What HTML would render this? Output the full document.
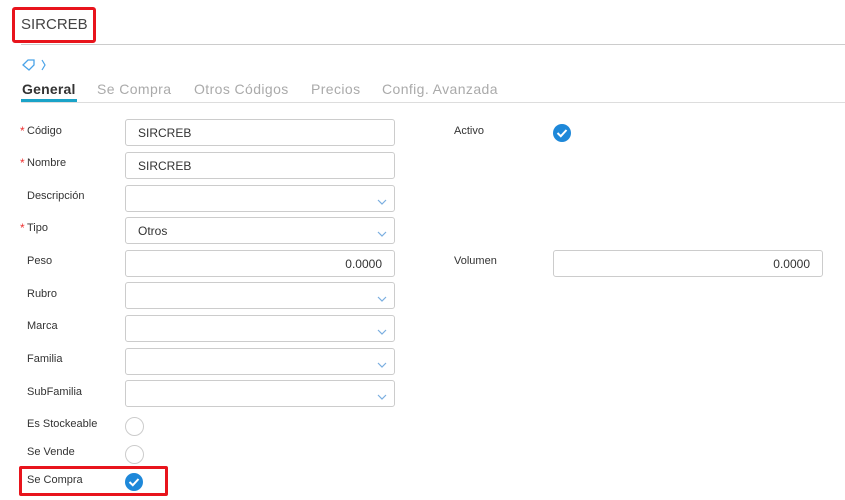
<!DOCTYPE html>
<html><head><meta charset="utf-8"><style>
*{margin:0;padding:0;box-sizing:border-box}
body{width:845px;height:500px;background:#fff;font-family:"Liberation Sans",sans-serif;position:relative;overflow:hidden;color:#333}
.a{position:absolute}
.lbl{position:absolute;font-size:11px;color:#333;left:27px}
.star{position:absolute;left:20px;color:#e33;font-size:12px}
.inp{position:absolute;left:125px;width:270px;height:27px;border:1px solid #ccc;border-radius:3px;font-size:12px;color:#333;padding:0 12px;line-height:27px}
.chev{position:absolute;right:5px;top:12px}
.tab{position:absolute;top:81px;font-size:14px;color:#aaa;letter-spacing:0.4px}
.circ{position:absolute;width:19px;height:19px;border:1px solid #ccc;border-radius:50%}
</style></head><body>
<div class="a" style="left:12px;top:7px;width:84px;height:36px;border:3px solid #e8141c;border-radius:3px"></div>
<div class="a" style="left:21px;top:16px;font-size:15px;color:#444">SIRCREB</div>
<div class="a" style="left:21px;top:44px;width:824px;height:1px;background:#ccc"></div>
<svg class="a" style="left:22px;top:59px" width="24" height="14" viewBox="0 0 24 14"><path d="M1 6 L6 1 L12 1 L12 6 L7 11 Z" fill="none" stroke="#4aa3e8" stroke-width="1.3"/><path d="M20 1 L23 6 L20 11" fill="none" stroke="#4aa3e8" stroke-width="1.2"/></svg>
<div class="tab" style="left:22px;color:#333;font-weight:bold;letter-spacing:0.2px">General</div>
<div class="tab" style="left:97px">Se Compra</div>
<div class="tab" style="left:194px">Otros Códigos</div>
<div class="tab" style="left:311px">Precios</div>
<div class="tab" style="left:382px">Config. Avanzada</div>
<div class="a" style="left:21px;top:99px;width:56px;height:3px;background:#1aa3c8"></div>
<div class="a" style="left:21px;top:102px;width:824px;height:1px;background:#ddd"></div>

<span class="star" style="top:124px">*</span><div class="lbl" style="top:125px">Código</div>
<div class="inp" style="top:119px">SIRCREB</div>
<span class="star" style="top:156px">*</span><div class="lbl" style="top:157px">Nombre</div>
<div class="inp" style="top:152px">SIRCREB</div>
<div class="lbl" style="top:190px">Descripción</div>
<div class="inp" style="top:185px"><svg class="chev" width="12" height="8"><path d="M1 2 L5 6 L9 2" fill="none" stroke="#7aaee0" stroke-width="1.2"/></svg></div>
<span class="star" style="top:221px">*</span><div class="lbl" style="top:222px">Tipo</div>
<div class="inp" style="top:217px">Otros<svg class="chev" width="12" height="8"><path d="M1 2 L5 6 L9 2" fill="none" stroke="#7aaee0" stroke-width="1.2"/></svg></div>
<div class="lbl" style="top:255px">Peso</div>
<div class="inp" style="top:250px;text-align:right">0.0000</div>
<div class="lbl" style="top:288px">Rubro</div>
<div class="inp" style="top:282px"><svg class="chev" width="12" height="8"><path d="M1 2 L5 6 L9 2" fill="none" stroke="#7aaee0" stroke-width="1.2"/></svg></div>
<div class="lbl" style="top:320px">Marca</div>
<div class="inp" style="top:315px"><svg class="chev" width="12" height="8"><path d="M1 2 L5 6 L9 2" fill="none" stroke="#7aaee0" stroke-width="1.2"/></svg></div>
<div class="lbl" style="top:353px">Familia</div>
<div class="inp" style="top:348px"><svg class="chev" width="12" height="8"><path d="M1 2 L5 6 L9 2" fill="none" stroke="#7aaee0" stroke-width="1.2"/></svg></div>
<div class="lbl" style="top:386px">SubFamilia</div>
<div class="inp" style="top:380px"><svg class="chev" width="12" height="8"><path d="M1 2 L5 6 L9 2" fill="none" stroke="#7aaee0" stroke-width="1.2"/></svg></div>

<div class="lbl" style="top:418px">Es Stockeable</div>
<div class="circ" style="left:125px;top:417px"></div>
<div class="lbl" style="top:446px">Se Vende</div>
<div class="circ" style="left:125px;top:445px"></div>
<div class="a" style="left:19px;top:466px;width:149px;height:30px;border:3px solid #e8141c;border-radius:2px"></div>
<div class="lbl" style="top:474px">Se Compra</div>
<svg class="a" style="left:124px;top:472px" width="20" height="20"><circle cx="10" cy="10" r="9" fill="#1e88d9"/><path d="M5.5 10 L8.8 13.2 L14.5 7" fill="none" stroke="#fff" stroke-width="2"/></svg>

<div class="a" style="left:454px;top:125px;font-size:11px">Activo</div>
<svg class="a" style="left:552px;top:123px" width="20" height="20"><circle cx="10" cy="10" r="9" fill="#1e88d9"/><path d="M5.5 10 L8.8 13.2 L14.5 7" fill="none" stroke="#fff" stroke-width="2"/></svg>
<div class="a" style="left:454px;top:255px;font-size:11px">Volumen</div>
<div class="inp" style="left:553px;top:250px;text-align:right">0.0000</div>
</body></html>
